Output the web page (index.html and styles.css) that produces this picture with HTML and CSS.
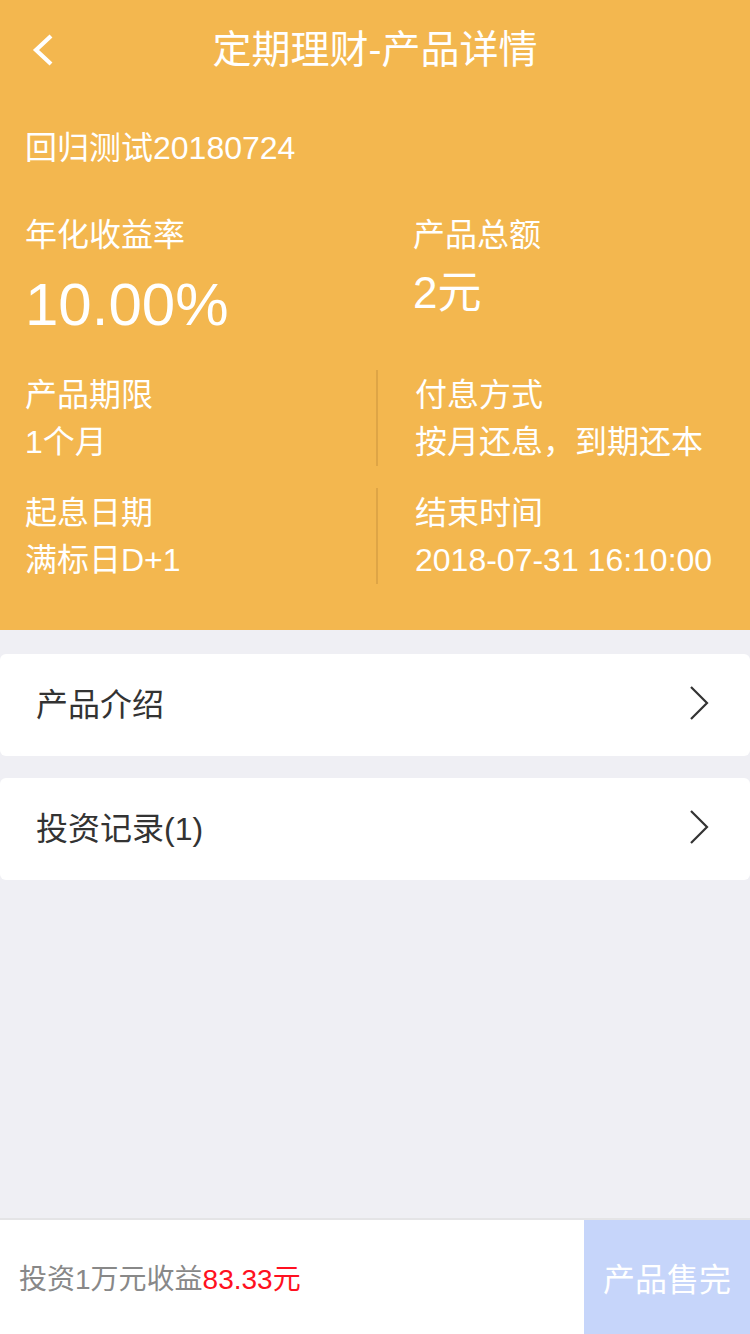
FILE: index.html
```html
<!DOCTYPE html>
<html lang="zh-CN">
<head>
<meta charset="utf-8">
<title>定期理财-产品详情</title>
<link rel="stylesheet" href="styles.css">
</head>
<body>
<div class="page">
  <header class="hero">
    <nav class="nav">
      <span class="back">
        <svg width="24" height="34" viewBox="0 0 24 34"><polyline points="19,2 4,16 19,30" fill="none" stroke="#fff" stroke-width="4.2" stroke-linecap="butt" stroke-linejoin="miter"/></svg>
      </span>
      <h1 class="title">定期理财-产品详情</h1>
    </nav>
    <div class="pname">回归测试20180724</div>
    <div class="top-row">
      <div class="cell">
        <div class="label">年化收益率</div>
        <div class="rate">10.00%</div>
      </div>
      <div class="cell right">
        <div class="label">产品总额</div>
        <div class="amount">2元</div>
      </div>
    </div>
    <div class="info-row">
      <div class="cell">
        <div class="label">产品期限</div>
        <div class="value">1个月</div>
      </div>
      <div class="divider"></div>
      <div class="cell right">
        <div class="label">付息方式</div>
        <div class="value">按月还息，到期还本</div>
      </div>
    </div>
    <div class="info-row second">
      <div class="cell">
        <div class="label">起息日期</div>
        <div class="value">满标日D+1</div>
      </div>
      <div class="divider"></div>
      <div class="cell right">
        <div class="label">结束时间</div>
        <div class="value">2018-07-31 16:10:00</div>
      </div>
    </div>
  </header>

  <section class="links">
    <div class="card">
      <span class="card-text">产品介绍</span>
      <svg class="arrow" width="22" height="36" viewBox="0 0 22 36"><polyline points="3,2 19,18 3,34" fill="none" stroke="#333" stroke-width="2.2"/></svg>
    </div>
    <div class="card">
      <span class="card-text">投资记录(1)</span>
      <svg class="arrow" width="22" height="36" viewBox="0 0 22 36"><polyline points="3,2 19,18 3,34" fill="none" stroke="#333" stroke-width="2.2"/></svg>
    </div>
  </section>

  <footer class="bottom">
    <div class="earn">投资1万元收益<span class="red">83.33元</span></div>
    <div class="sold">产品售完</div>
  </footer>
</div>
</body>
</html>
```

FILE: styles.css
```css
* { box-sizing: border-box; margin: 0; padding: 0; }
html, body {
  width: 750px;
  height: 1334px;
  background: #efeff4;
  font-family: "Liberation Sans", "Noto Sans CJK SC", sans-serif;
  overflow: hidden;
}
.page {
  position: relative;
  width: 750px;
  height: 1334px;
  display: flex;
  flex-direction: column;
}
.hero {
  background: #f3b74f;
  color: #fff;
  padding-bottom: 46px;
}
.nav {
  position: relative;
  height: 100px;
  display: flex;
  align-items: center;
  justify-content: center;
}
.back {
  position: absolute;
  left: 32px;
  top: 34px;
  width: 24px;
  height: 34px;
}
.back svg { display: block; }
.title {
  font-size: 39px;
  font-weight: normal;
  line-height: 100px;
  letter-spacing: 0;
}
.pname {
  margin-top: 28px;
  padding-left: 25px;
  font-size: 32px;
  line-height: 40px;
}
.top-row {
  margin-top: 47px;
  display: grid;
  grid-template-columns: 376px 2px 1fr;
}
.top-row .cell:first-child { grid-column: 1; }
.top-row .cell.right { grid-column: 3; }
.cell { padding-left: 25px; }
.cell.right { padding-left: 35px; }
.label {
  font-size: 32px;
  line-height: 40px;
}
.rate {
  margin-top: 15px;
  font-size: 60px;
  line-height: 70px;
}
.amount {
  margin-top: 13px;
  font-size: 44px;
  line-height: 50px;
}
.info-row {
  margin-top: 30px;
  display: grid;
  grid-template-columns: 376px 2px 1fr;
  height: 96px;
}
.info-row.second { margin-top: 22px; }
.info-row .label { margin-top: 5px; }
.value {
  margin-top: 7px;
  font-size: 32px;
  line-height: 40px;
  white-space: nowrap;
}
.divider {
  background: #dea546;
  width: 2px;
  height: 96px;
}
.info-row .cell.right { padding-left: 37px; }
.links {
  margin-top: 24px;
  display: flex;
  flex-direction: column;
  gap: 22px;
}
.card {
  height: 102px;
  background: #fff;
  border-radius: 6px;
  display: flex;
  align-items: center;
  justify-content: space-between;
  padding: 0 40px 0 36px;
}
.card-text {
  font-size: 32px;
  color: #333;
  line-height: 40px;
}
.arrow { display: block; margin-top: -4px; }
.bottom {
  position: absolute;
  left: 0;
  bottom: 0;
  width: 750px;
  height: 116px;
  border-top: 2px solid #e4e4e6;
  background: #fff;
  display: flex;
  align-items: stretch;
}
.earn {
  flex: 1;
  display: flex;
  align-items: center;
  padding-left: 19px;
  font-size: 28px;
  color: #888;
}
.red { color: #ff1020; }
.sold {
  width: 166px;
  background: #c6d5fa;
  color: #fff;
  font-size: 32px;
  display: flex;
  align-items: center;
  justify-content: center;
}
```
